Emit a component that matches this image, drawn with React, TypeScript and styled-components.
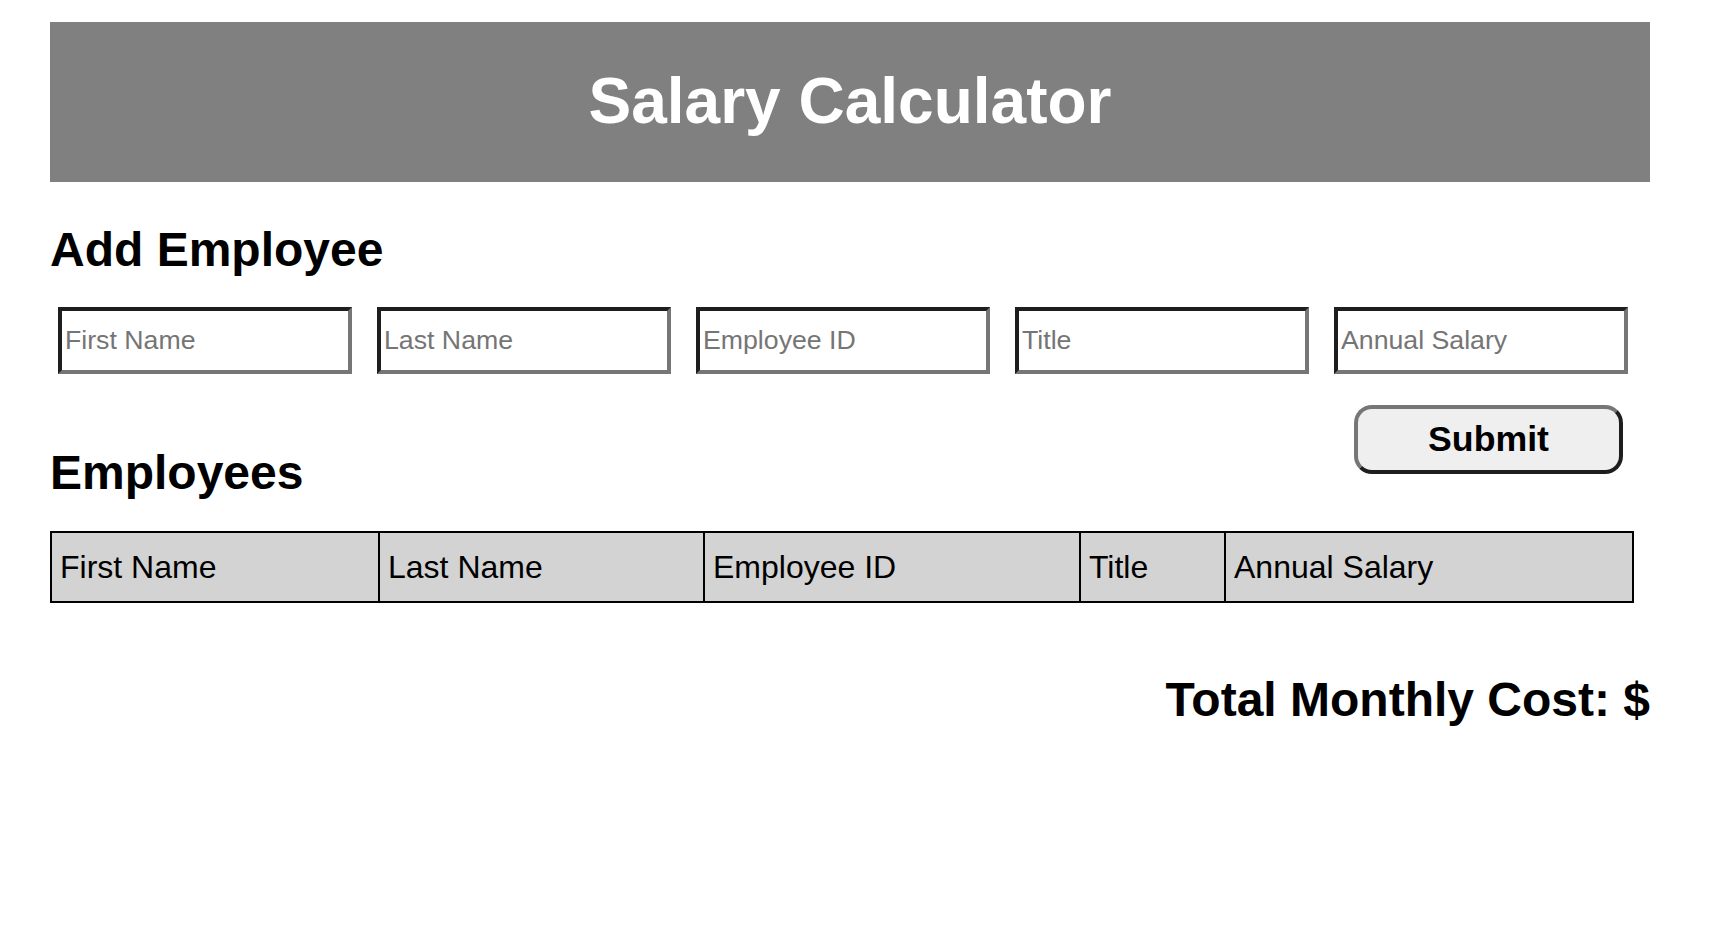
import React from "react";
import styled, { createGlobalStyle } from "styled-components";

const GlobalStyle = createGlobalStyle`
  html, body {
    margin: 0;
    padding: 0;
    background: #ffffff;
  }
  body {
    font-family: "Liberation Sans", Arial, sans-serif;
    color: #000000;
  }
  * {
    box-sizing: border-box;
  }
`;

const Page = styled.div`
  width: 1710px;
  padding: 22px 60px 0 50px;
  font-family: "Liberation Sans", Arial, sans-serif;
`;

const Banner = styled.header`
  height: 160px;
  background: #808080;
  display: flex;
  align-items: center;
  justify-content: center;
`;

const Title = styled.h1`
  margin: 0;
  font-size: 64px;
  font-weight: 700;
  color: #ffffff;
  padding-bottom: 3px;
`;

const SectionHeading = styled.h2<{ $top: number }>`
  margin: ${(p) => p.$top}px 0 0 0;
  font-size: 48px;
  font-weight: 700;
  line-height: normal;
`;

const InputRow = styled.div`
  display: flex;
  gap: 25px;
  margin-top: 30px;
  padding-left: 8px;
`;

const Field = styled.input`
  width: 294px;
  height: 67px;
  padding: 0 3px;
  font-family: "Liberation Sans", Arial, sans-serif;
  font-size: 26.7px;
  color: #000000;
  background: #ffffff;
  border-style: solid;
  border-width: 4px;
  border-color: #1e1e1e #767676 #767676 #1e1e1e;
  border-radius: 0;
  outline: none;

  &::placeholder {
    color: #757575;
    opacity: 1;
  }
`;

const ActionRow = styled.div`
  display: flex;
  justify-content: space-between;
  align-items: flex-start;
  margin-top: 31px;
`;

const SubmitButton = styled.button`
  width: 269px;
  height: 69px;
  margin-right: 27px;
  font-family: "Liberation Sans", Arial, sans-serif;
  font-size: 35.7px;
  font-weight: 700;
  color: #000000;
  background: #efefef;
  border-style: solid;
  border-width: 4px;
  border-color: #767676 #1e1e1e #1e1e1e #767676;
  border-radius: 18px;
  padding: 0;
  cursor: pointer;
`;

const Table = styled.table`
  margin-top: 31px;
  width: 1582px;
  border-collapse: collapse;
  table-layout: fixed;
  border: 2px solid #000000;
`;

const HeadCell = styled.th<{ $w: number }>`
  width: ${(p) => p.$w}px;
  height: 70px;
  padding: 0 0 0 8px;
  background: #d3d3d3;
  border: 2px solid #000000;
  text-align: left;
  font-size: 32px;
  font-weight: 400;
`;

const Total = styled.h2`
  margin: 69px 0 0 0;
  text-align: right;
  font-size: 48px;
  font-weight: 700;
  line-height: normal;
`;

const fields = ["First Name", "Last Name", "Employee ID", "Title", "Annual Salary"];
const columns: { label: string; w: number }[] = [
  { label: "First Name", w: 328 },
  { label: "Last Name", w: 325 },
  { label: "Employee ID", w: 376 },
  { label: "Title", w: 145 },
  { label: "Annual Salary", w: 408 },
];

export default function App() {
  return (
    <>
      <GlobalStyle />
      <Page>
        <Banner>
          <Title>Salary Calculator</Title>
        </Banner>
        <SectionHeading $top={40}>Add Employee</SectionHeading>
        <InputRow>
          {fields.map((f) => (
            <Field key={f} type="text" placeholder={f} />
          ))}
        </InputRow>
        <ActionRow>
          <SectionHeading $top={40}>Employees</SectionHeading>
          <SubmitButton type="button">Submit</SubmitButton>
        </ActionRow>
        <Table>
          <thead>
            <tr>
              {columns.map((c) => (
                <HeadCell key={c.label} $w={c.w}>
                  {c.label}
                </HeadCell>
              ))}
            </tr>
          </thead>
          <tbody />
        </Table>
        <Total>Total Monthly Cost: $</Total>
      </Page>
    </>
  );
}
